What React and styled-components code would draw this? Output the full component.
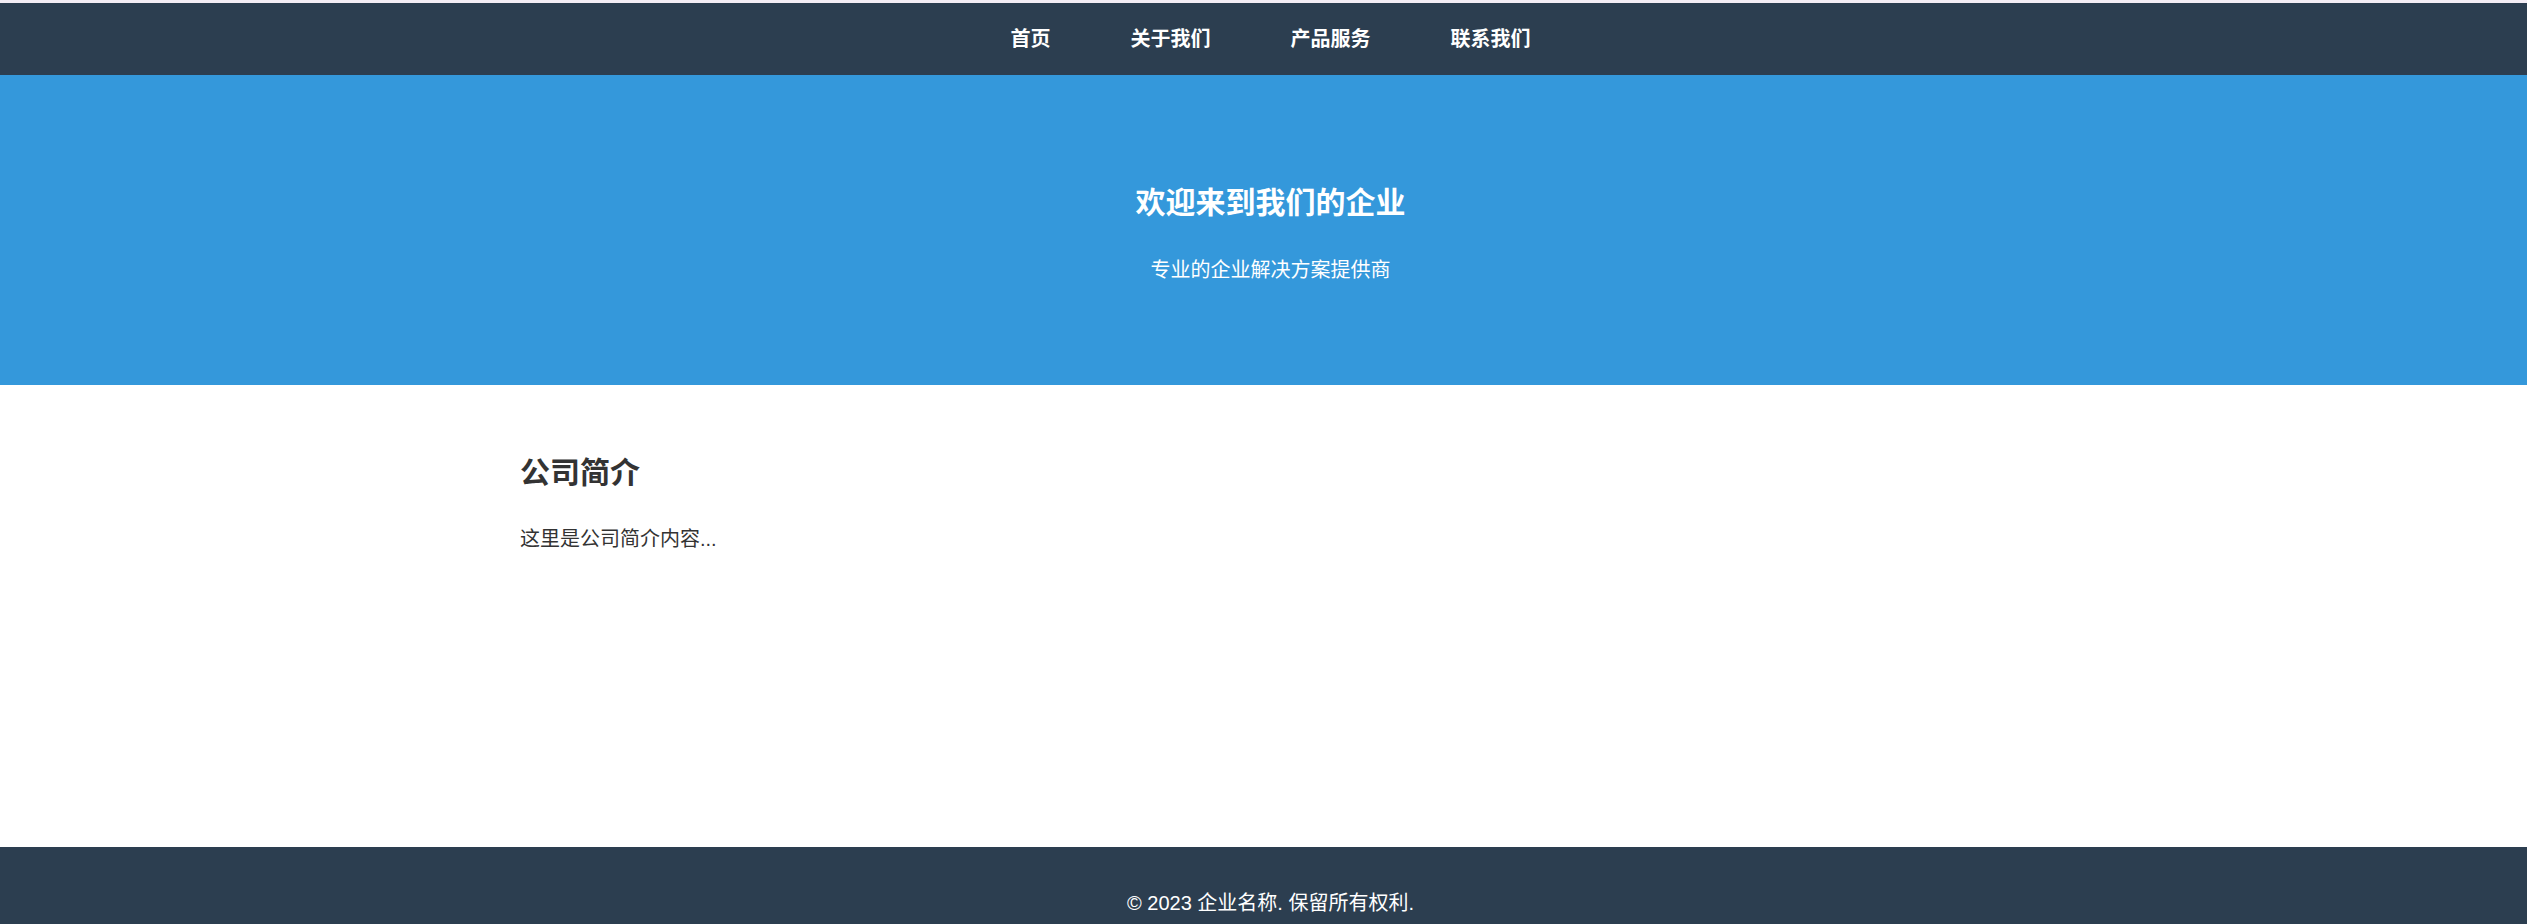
import React from "react";
import styled, { createGlobalStyle } from "styled-components";

const GlobalStyle = createGlobalStyle`
  * {
    box-sizing: border-box;
  }
  body {
    margin: 0;
    padding-top: 3px;
    background: #f3edf5;
    font-family: "Liberation Sans", Arial, "Noto Sans CJK SC", sans-serif;
    color: #333;
  }
`;

const Header = styled.header`
  height: 72px;
  background: #2c3e50;
  display: flex;
  align-items: center;
  justify-content: center;
  padding-left: 14px;
`;

const Nav = styled.ul`
  list-style: none;
  margin: 0;
  padding: 0;
  display: flex;
  gap: 80px;

  li {
    color: #fff;
    font-size: 20px;
    font-weight: bold;
    line-height: 30px;
  }
`;

const Hero = styled.section`
  height: 310px;
  background: #3498db;
  color: #fff;
  text-align: center;
  padding: 110px 0 0 14px;

  h1 {
    margin: 0 0 34px;
    font-size: 30px;
    line-height: 36px;
    font-weight: bold;
  }

  p {
    margin: 0;
    font-size: 20px;
    line-height: 30px;
  }
`;

const Main = styled.main`
  background: #fff;
  min-height: 462px;
  padding-top: 70px;
`;

const Container = styled.div`
  max-width: 1487px;
  margin: 0 auto;

  h2 {
    margin: 0 0 33px;
    font-size: 30px;
    line-height: 36px;
    font-weight: bold;
    color: #333;
  }

  p {
    margin: 0;
    font-size: 20px;
    line-height: 30px;
  }
`;

const Footer = styled.footer`
  background: #2c3e50;
  color: #fff;
  text-align: center;
  padding: 41px 0 39px 14px;
  font-size: 20px;
  line-height: 30px;
`;

const links = ["首页", "关于我们", "产品服务", "联系我们"];

export default function App() {
  return (
    <>
      <GlobalStyle />
      <Header>
        <Nav>
          {links.map((l) => (
            <li key={l}>{l}</li>
          ))}
        </Nav>
      </Header>
      <Hero>
        <h1>欢迎来到我们的企业</h1>
        <p>专业的企业解决方案提供商</p>
      </Hero>
      <Main>
        <Container>
          <h2>公司简介</h2>
          <p>这里是公司简介内容...</p>
        </Container>
      </Main>
      <Footer>© 2023 企业名称. 保留所有权利.</Footer>
    </>
  );
}
